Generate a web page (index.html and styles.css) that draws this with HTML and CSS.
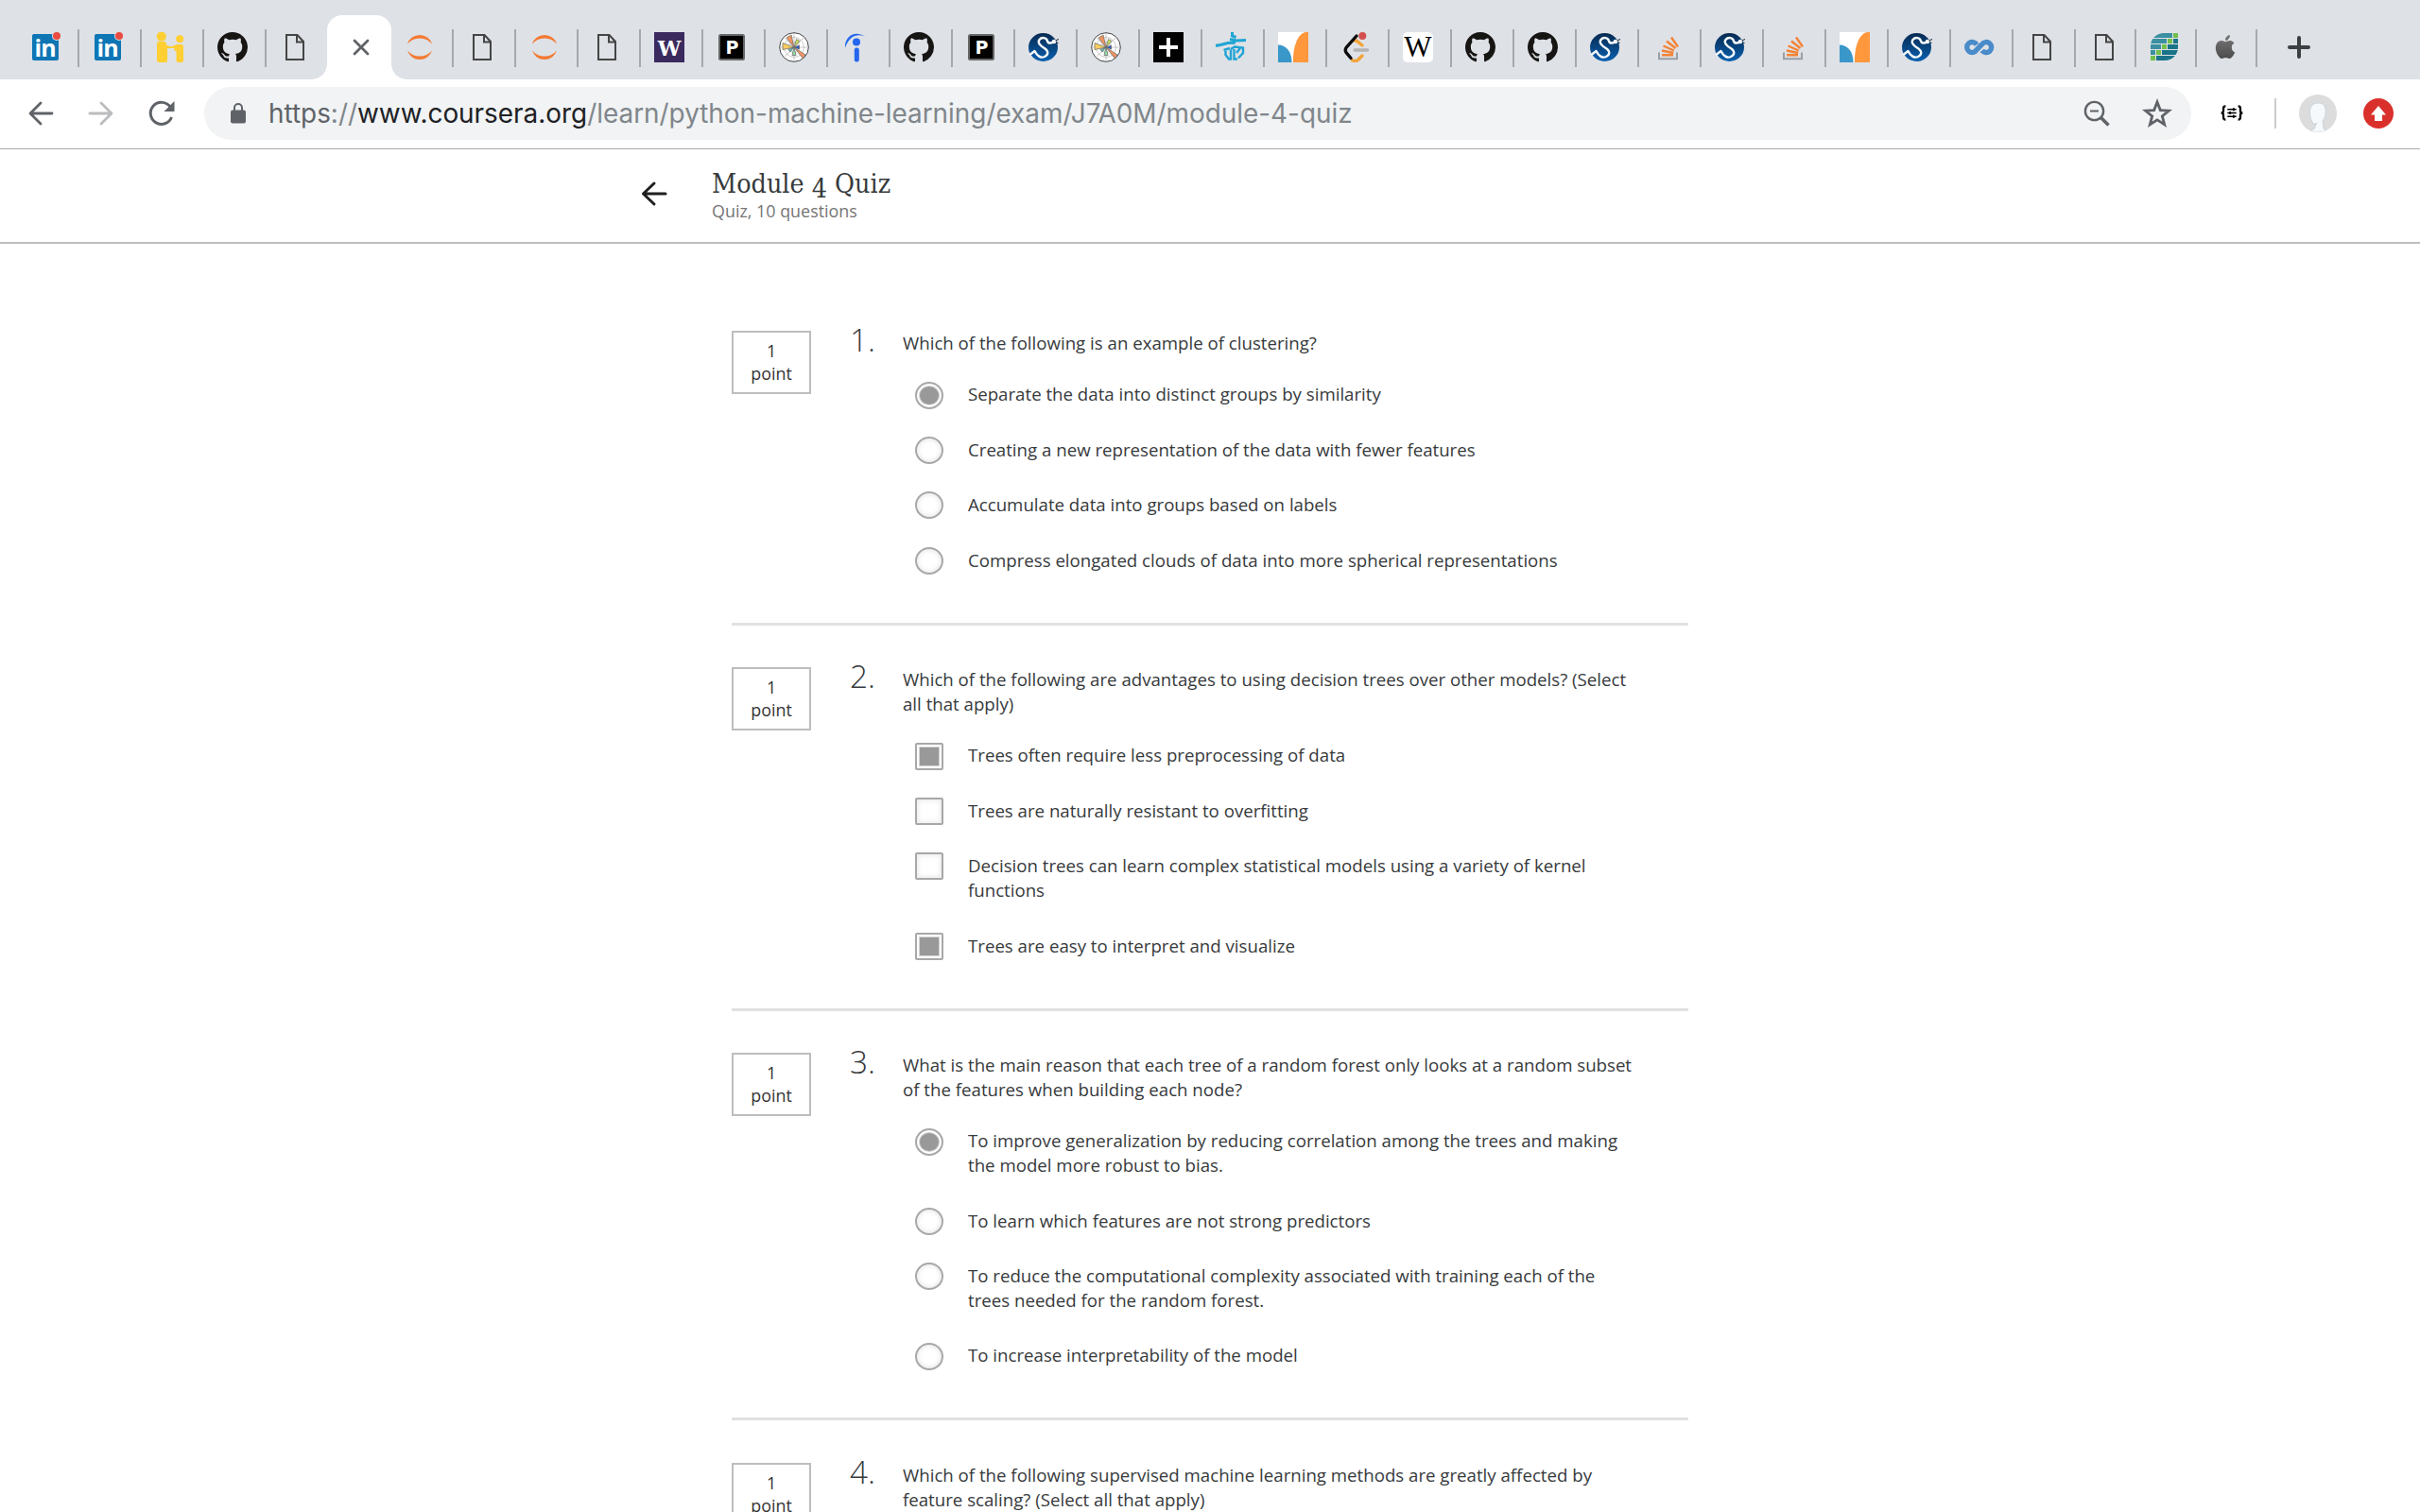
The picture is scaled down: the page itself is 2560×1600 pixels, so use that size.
FILE: index.html
```
<!DOCTYPE html>
<html lang="en">
<head>
<meta charset="utf-8">
<title>Module 4 Quiz</title>
<link rel="stylesheet" href="styles.css">
</head>
<body>
<svg class="defs" width="0" height="0">
  <defs>
    <linearGradient id="navy" x1="0" y1="0" x2="0" y2="1"><stop offset="0" stop-color="#062a50"/><stop offset="1" stop-color="#0a60b0"/></linearGradient>
    <linearGradient id="steel" x1="0" y1="0" x2="0" y2="1"><stop offset="0" stop-color="#777"/><stop offset="1" stop-color="#4c4c4c"/></linearGradient>
    <clipPath id="leaf"><path d="M15 1H30V16A14 14 0 0 1 16 30H1V15A14 14 0 0 1 15 1Z"/></clipPath>
    <clipPath id="disc"><circle cx="20" cy="20" r="20"/></clipPath>
  </defs>
  <symbol id="hi" viewBox="0 0 32 32"><g fill="#ffcf33"><circle cx="6.800" cy="4.600" r="5"/><circle cx="26.200" cy="7.200" r="4"/><path d="M2 12Q2 10 4 10H10Q12 10 12 13.500L15 15H19L21.500 13.500Q22 13 24 13H28Q30 13 30 15V30Q30 32 28 32H24.500Q22.500 32 22.500 30V20H20.500V17H13V30Q13 32 11 32H4Q2 32 2 30Z"/></g></symbol>
  <symbol id="github" viewBox="0 0 16 16"><path fill="#161514" d="M8 0C3.58 0 0 3.58 0 8c0 3.54 2.29 6.53 5.47 7.59.4.07.55-.17.55-.38 0-.19-.01-.82-.01-1.49-2.01.37-2.53-.49-2.69-.94-.09-.23-.48-.94-.82-1.13-.28-.15-.68-.52-.01-.53.63-.01 1.08.58 1.23.82.72 1.21 1.87.87 2.33.66.07-.52.28-.87.51-1.07-1.78-.2-3.64-.89-3.64-3.95 0-.87.31-1.59.82-2.15-.08-.2-.36-1.02.08-2.12 0 0 .67-.21 2.2.82.64-.18 1.32-.27 2-.27s1.36.09 2 .27c1.53-1.04 2.2-.82 2.2-.82.44 1.1.16 1.92.08 2.12.51.56.82 1.27.82 2.15 0 3.07-1.87 3.75-3.65 3.95.29.25.54.73.54 1.48 0 1.07-.01 1.93-.01 2.2 0 .21.15.46.55.38A8.01 8.01 0 0 0 16 8c0-4.42-3.58-8-8-8z"/></symbol>
  <symbol id="page" viewBox="0 0 32 32"><path d="M7 3H18.500L25 10V29H7ZM18 3V10.500H25" fill="none" stroke="#454545" stroke-width="2"/></symbol>
  <symbol id="jupyter" viewBox="0 0 32 32"><g fill="#f37a33"><path d="M3 12.500A13.600 13.600 0 0 1 29 12.500Q24 6.500 16 6.500T3 12.500Z"/><path d="M3 19.500A13.600 13.600 0 0 0 29 19.500Q24 25.500 16 25.500T3 19.500Z"/></g></symbol>
  <symbol id="radar" viewBox="0 0 32 32"><circle cx="16" cy="16" r="15.300" fill="#fff" stroke="#444" stroke-width="1"/><g fill="none" stroke="#bbb" stroke-width=".8"><circle cx="16" cy="16" r="10.500"/><circle cx="16" cy="16" r="5.500"/><path d="M16 1V31M1 16H31M5.400 5.400L26.600 26.600M5.400 26.600L26.600 5.400"/></g><g stroke="#666" stroke-width=".7"><path d="M16 16L8 6L13 3Z" fill="#f39560"/><path d="M16 16L28 24L25 27.500Z" fill="#f39560"/><path d="M16 16L4 11.500V18.500Z" fill="#f8cd5c"/><path d="M16 16L18.500 7.500L22 9.500Z" fill="#c5e35c"/><path d="M16 16L14 24.500H18Z" fill="#93dba0"/><path d="M16 16L10 18.500L12 21Z" fill="#5fc0b8"/><path d="M16 16L21.500 14V18Z" fill="#2c58c0"/></g></symbol>
  <symbol id="indeed" viewBox="0 0 32 32"><g fill="#2566ef"><circle cx="16" cy="10.500" r="4"/><rect x="13.800" y="16.500" width="5" height="15" rx="2.300"/><path d="M4 16.500C3 6 13 -3 25 4.500C16 1 8 5 4 16.500Z"/></g></symbol>
  <symbol id="scipy" viewBox="0 0 32 32"><ellipse cx="15.500" cy="16" rx="15.500" ry="15" fill="url(#navy)"/><path d="M2 23.500L6.500 20C9 25 13 28 17 26C21 24 21.500 20.500 17.500 17.500C13 14.500 9 11.500 11.500 8C14 5 19 5.500 20 9.500C21 12.500 24.500 12 28 9.500" fill="none" stroke="#f4f8fb" stroke-width="2.400" stroke-linecap="round" stroke-linejoin="round"/><circle cx="27" cy="10" r="2.300" fill="#f4f8fb"/><path d="M28.500 9L32 7.500M29 10.500L31.500 11.500" stroke="#123" stroke-width="1"/></symbol>
  <symbol id="plusbox" viewBox="0 0 32 32"><rect width="32" height="32" fill="#000"/><path d="M16 6V26M6 16H26" stroke="#fff" stroke-width="4"/></symbol>
  <symbol id="skater" viewBox="0 0 32 32"><g fill="none" stroke="#20a4d4"><path d="M17.500 0V4L21.500 5.500" stroke-width="3"/><path d="M0 14.500L5 13.500L13 11.500L21 11M15 7.500L22 9L32 8.500" stroke-width="3.200"/><path d="M20 9L17 12" stroke-width="3"/><path d="M8.500 19L15 17M10.500 18.500V24L14 28.500H16V18.500M16 18L20 15.500L29 16.500V22L24 27.500M19.500 18V28.500H23M22 22L25.500 17.500" stroke-width="2.400"/></g></symbol>
  <symbol id="curves" viewBox="0 0 32 32"><rect width="32" height="32" fill="#fff"/><path d="M0 13.500C8 13.500 14.500 20 14.500 32H0Z" fill="#3a97ca"/><path d="M16 32C15.500 17 20 2 29 0H32V32Z" fill="#ff973d"/></symbol>
  <symbol id="bracket" viewBox="0 0 32 32"><g fill="none" stroke-width="3.400" stroke-linecap="round"><path d="M14.500 9L17 9L23 14" stroke="#f3a33a"/><path d="M12.500 29.800Q17 31.500 19 29L23 25" stroke="#f3a33a"/><path d="M17 4L6 16.500Q4.500 19 6 21.500L11 27.500" stroke="#0b0b0b"/><path d="M15.200 19H28.500" stroke="#b3b3b3"/></g><circle cx="23.300" cy="4" r="4" fill="#d3504e"/></symbol>
  <symbol id="stack" viewBox="0 0 32 32"><path d="M7 21.500V28.200H26V21.500" fill="none" stroke="#9a9fa6" stroke-width="2"/><g stroke="#f48336" stroke-width="2.400"><path d="M10 24.300H22M10 19.500L22.200 22M11.500 14.500L22.800 19.500M15 9.500L24.500 17M20 5.500L27 15.500"/></g></symbol>
  <symbol id="loop" viewBox="0 0 32 32"><path d="M13 13.300A5.500 5.500 0 1 0 13 18.700L18.700 12.800A5.500 5.500 0 1 1 18.700 19.300" fill="none" stroke="#4a8bc9" stroke-width="5.400"/></symbol>
  <symbol id="bricks" viewBox="0 0 32 32"><g clip-path="url(#leaf)"><path d="M1 1H24V6H1ZM1 7H18V12H1ZM1 13H12V18H1ZM1 19H6V24H1Z" fill="#3a8fa1"/><path d="M25 7H30V12H25ZM19 13H30V18H19ZM13 19H30V24H13ZM7 25H30V30H7Z" fill="#1a7489"/><path d="M19 7H24V12H19ZM13 13H18V18H13ZM7 19H12V24H7Z" fill="#72bf4b"/></g><path d="M25 1H30V6H25ZM1 25H6V30H1Z" fill="#72bf4b"/></symbol>
  <symbol id="apple" viewBox="0 0 32 32"><path transform="translate(3.500 3) scale(1.040)" fill="url(#steel)" d="M12.152 6.896c-.948 0-2.415-1.078-3.960-1.040-2.040.027-3.910 1.183-4.961 3.014-2.117 3.675-.546 9.103 1.519 12.090 1.013 1.454 2.208 3.090 3.792 3.039 1.520-.065 2.090-.987 3.935-.987 1.831 0 2.350.987 3.960.948 1.637-.026 2.676-1.480 3.676-2.948 1.156-1.688 1.636-3.325 1.662-3.415-.039-.013-3.182-1.221-3.220-4.857-.026-3.040 2.480-4.494 2.597-4.559-1.429-2.090-3.623-2.324-4.390-2.376-2-.156-3.675 1.090-4.610 1.090zM15.530 3.830c.843-1.012 1.400-2.427 1.245-3.830-1.207.052-2.662.805-3.532 1.818-.780.896-1.454 2.338-1.273 3.714 1.338.104 2.715-.688 3.559-1.701"/></symbol>
</svg>

<nav class="tabs">
  <div class="tab"><svg viewBox="0 0 32 32"><rect x="2" y="2" width="28" height="28" rx="2" fill="#0e76b4"/><text x="4.500" y="26" class="glyph-in">in</text><circle cx="28" cy="4" r="5" fill="#dee1e6"/><circle cx="28" cy="4" r="4" fill="#e94b40"/></svg></div>
  <div class="tab"><svg viewBox="0 0 32 32"><rect x="2" y="2" width="28" height="28" rx="2" fill="#0e76b4"/><text x="4.500" y="26" class="glyph-in">in</text><circle cx="28" cy="4" r="5" fill="#dee1e6"/><circle cx="28" cy="4" r="4" fill="#e94b40"/></svg></div>
  <div class="tab"><svg><use href="#hi"/></svg></div>
  <div class="tab"><svg><use href="#github"/></svg></div>
  <div class="tab plain"><svg><use href="#page"/></svg></div>
  <div class="tab active"><svg viewBox="0 0 32 32"><path d="M9 9L23 23M23 9L9 23" stroke="#5f6368" stroke-width="2.800" stroke-linecap="round"/></svg></div>
  <div class="tab"><svg><use href="#jupyter"/></svg></div>
  <div class="tab"><svg><use href="#page"/></svg></div>
  <div class="tab"><svg><use href="#jupyter"/></svg></div>
  <div class="tab"><svg><use href="#page"/></svg></div>
  <div class="tab"><svg viewBox="0 0 32 32"><rect width="32" height="32" fill="#3a2a5e"/><text x="16" y="24.500" class="glyph-uw">W</text></svg></div>
  <div class="tab"><svg viewBox="0 0 32 32"><rect x="3" y="3" width="26" height="26" rx="1.500" fill="#000" stroke="#666" stroke-width="2"/><text x="16.500" y="22.500" class="glyph-p">P</text></svg></div>
  <div class="tab"><svg><use href="#radar"/></svg></div>
  <div class="tab"><svg><use href="#indeed"/></svg></div>
  <div class="tab"><svg><use href="#github"/></svg></div>
  <div class="tab"><svg viewBox="0 0 32 32"><rect x="3" y="3" width="26" height="26" rx="1.500" fill="#000" stroke="#666" stroke-width="2"/><text x="16.500" y="22.500" class="glyph-p">P</text></svg></div>
  <div class="tab"><svg><use href="#scipy"/></svg></div>
  <div class="tab"><svg><use href="#radar"/></svg></div>
  <div class="tab"><svg><use href="#plusbox"/></svg></div>
  <div class="tab"><svg><use href="#skater"/></svg></div>
  <div class="tab"><svg><use href="#curves"/></svg></div>
  <div class="tab"><svg><use href="#bracket"/></svg></div>
  <div class="tab"><svg viewBox="0 0 32 32"><rect width="32" height="32" rx="5" fill="#fff"/><text x="16" y="26" class="glyph-wiki">W</text></svg></div>
  <div class="tab"><svg><use href="#github"/></svg></div>
  <div class="tab"><svg><use href="#github"/></svg></div>
  <div class="tab"><svg><use href="#scipy"/></svg></div>
  <div class="tab"><svg><use href="#stack"/></svg></div>
  <div class="tab"><svg><use href="#scipy"/></svg></div>
  <div class="tab"><svg><use href="#stack"/></svg></div>
  <div class="tab"><svg><use href="#curves"/></svg></div>
  <div class="tab"><svg><use href="#scipy"/></svg></div>
  <div class="tab"><svg><use href="#loop"/></svg></div>
  <div class="tab"><svg><use href="#page"/></svg></div>
  <div class="tab narrow"><svg><use href="#page"/></svg></div>
  <div class="tab narrow"><svg><use href="#bricks"/></svg></div>
  <div class="tab narrow"><svg><use href="#apple"/></svg></div>
  <div class="new-tab"><svg viewBox="0 0 32 32"><path d="M16 6V26M6 16H26" stroke="#3c4043" stroke-width="4" stroke-linecap="round"/></svg></div>
</nav>

<div class="toolbar">
  <svg class="nav-icon" viewBox="0 0 32 32"><path d="M28 16H5.500M16 5L5 16L16 27" fill="none" stroke="#5f6368" stroke-width="2.800" stroke-linecap="round" stroke-linejoin="round"/></svg>
  <svg class="nav-icon" viewBox="0 0 32 32"><path d="M4 16H26.500M16 5L27 16L16 27" fill="none" stroke="#babcbe" stroke-width="2.800" stroke-linecap="round" stroke-linejoin="round"/></svg>
  <svg class="nav-icon" viewBox="0 0 32 32"><path d="M26.500 20A11.500 11.500 0 1 1 25 9" fill="none" stroke="#5f6368" stroke-width="3"/><path d="M29.500 3V14H18.500Z" fill="#5f6368"/></svg>
  <div class="address">
    <svg class="lock" viewBox="0 0 16 22"><rect y="7.500" width="16" height="14" rx="2" fill="#5f6368"/><path d="M4 8V5A4 4 0 0 1 12 5V8" fill="none" stroke="#5f6368" stroke-width="2"/></svg>
    <div class="url"><span class="scheme">https</span>://<span class="host">www.coursera.org</span>/learn/python-machine-learning/exam/J7A0M/module-4-quiz</div>
    <svg class="act" viewBox="0 0 32 32"><g fill="none" stroke="#5f6368"><circle cx="13.500" cy="13.500" r="9.600" stroke-width="2.400"/><path d="M9 13.500H18" stroke-width="2"/><path d="M20.500 20.500L28.500 28.500" stroke-width="3.600"/></g></svg>
    <svg class="act" viewBox="0 0 32 32"><path d="M16 4L19.300 12.600L28.500 13.100L21.300 18.900L23.700 27.800L16 22.800L8.300 27.800L10.700 18.900L3.500 13.100L12.700 12.600Z" fill="none" stroke="#5f6368" stroke-width="2.800"/></svg>
  </div>
  <svg class="braces" viewBox="0 0 26 18"><g fill="none" stroke="#000"><path d="M6 1.500Q3.500 1.500 3.500 4V6.500Q3.500 9 1 9Q3.500 9 3.500 11.500V14Q3.500 16.500 6 16.500M20 1.500Q22.500 1.500 22.500 4V6.500Q22.500 9 25 9Q22.500 9 22.500 11.500V14Q22.500 16.500 20 16.500" stroke-width="2.400"/><path d="M8 5H18M8 9H18M8 13H18" stroke-width="1.600"/><path d="M15 3.500V6.500M11 7.500V10.500M15 11.500V14.500" stroke-width="2"/></g></svg>
  <div class="rule"></div>
  <svg class="avatar" viewBox="0 0 40 40"><g clip-path="url(#disc)"><rect width="40" height="40" fill="#dcdcdc"/><path d="M11.500 19C11.500 12 15 9 20.500 9S29 12 28 21Q27.500 25 25 28Q25 35 28 40H11Q17 37 17.500 33.500Q17 31 14 29.500Q11.500 25 11.500 19Z" fill="#f6f9fb" stroke="#c4cfd8" stroke-width=".8"/><path d="M13 29Q17 33.500 21 28Q18 31 18 33Q16 30 13 29Z" fill="#b5c6d2"/></g></svg>
  <svg class="update" viewBox="0 0 32 32"><circle cx="16" cy="16" r="16" fill="#da302c"/><path d="M16 8L24 17.500H20V24H12V17.500H8Z" fill="#fff"/></svg>
</div>

<header class="quiz-header">
  <svg class="back" viewBox="0 0 32 32"><path d="M28 16H4.500M16 5L4.500 16L16 27" fill="none" stroke="#1f1f1f" stroke-width="3" stroke-linecap="round" stroke-linejoin="round"/></svg>
  <div>
    <h1 class="title">Module <span class="oldstyle">4</span> Quiz</h1>
    <div class="subtitle">Quiz, 10 questions</div>
  </div>
</header>

<main class="quiz">
  <section class="question">
    <div class="points">1<br>point</div>
    <div class="number">1.</div>
    <div class="body">
      <p class="prompt">Which of the following is an example of clustering?</p>
      <ul class="options">
        <li><i class="radio on"></i><span>Separate the data into distinct groups by similarity</span></li>
        <li><i class="radio"></i><span>Creating a new representation of the data with fewer features</span></li>
        <li><i class="radio"></i><span>Accumulate data into groups based on labels</span></li>
        <li><i class="radio"></i><span>Compress elongated clouds of data into more spherical representations</span></li>
      </ul>
    </div>
  </section>
  <section class="question">
    <div class="points">1<br>point</div>
    <div class="number">2.</div>
    <div class="body">
      <p class="prompt">Which of the following are advantages to using decision trees over other models? (Select<br>all that apply)</p>
      <ul class="options">
        <li><i class="check on"></i><span>Trees often require less preprocessing of data</span></li>
        <li><i class="check"></i><span>Trees are naturally resistant to overfitting</span></li>
        <li><i class="check"></i><span>Decision trees can learn complex statistical models using a variety of kernel<br>functions</span></li>
        <li><i class="check on"></i><span>Trees are easy to interpret and visualize</span></li>
      </ul>
    </div>
  </section>
  <section class="question">
    <div class="points">1<br>point</div>
    <div class="number">3.</div>
    <div class="body">
      <p class="prompt">What is the main reason that each tree of a random forest only looks at a random subset<br>of the features when building each node?</p>
      <ul class="options">
        <li><i class="radio on"></i><span>To improve generalization by reducing correlation among the trees and making<br>the model more robust to bias.</span></li>
        <li><i class="radio"></i><span>To learn which features are not strong predictors</span></li>
        <li><i class="radio"></i><span>To reduce the computational complexity associated with training each of the<br>trees needed for the random forest.</span></li>
        <li><i class="radio"></i><span>To increase interpretability of the model</span></li>
      </ul>
    </div>
  </section>
  <section class="question">
    <div class="points">1<br>point</div>
    <div class="number">4.</div>
    <div class="body">
      <p class="prompt">Which of the following supervised machine learning methods are greatly affected by<br>feature scaling? (Select all that apply)</p>
    </div>
  </section>
</main>
</body>
</html>
```
FILE: styles.css
```
* { box-sizing: border-box; }

html { overflow: hidden; }
body {
  display: flex;
  flex-direction: column;
  margin: 0;
  height: 1600px;
  overflow: hidden;
  background: #fff;
  color: #373a3c;
  font-family: "Open Sans", sans-serif;
}

svg { display: block; }
.defs { position: absolute; }

/* Tab strip */
.tabs {
  display: flex;
  flex: none;
  align-items: flex-end;
  height: 84px;
  padding-left: 18px;
  background: #dee1e6;
}
.tab {
  flex: none;
  width: 66px;
  height: 40px;
  margin-bottom: 13px;
  padding: 3px 0 0 14px;
  border-right: 2px solid #a5a8ac;
}
.tab svg, .new-tab svg { width: 32px; height: 32px; }
.tab.narrow { width: 64px; }
.tab.plain { border-color: transparent; }
.tab.active {
  position: relative;
  width: 68px;
  height: 68px;
  margin: 0 0 0 -2px;
  padding: 18px 0 0 20px;
  border: 0;
  border-radius: 16px 16px 0 0;
  background: #fff;
}
.tab.active::before, .tab.active::after {
  content: "";
  position: absolute;
  bottom: 0;
  width: 16px;
  height: 16px;
}
.tab.active::before { left: -16px; background: radial-gradient(circle at 0 0, transparent 15.5px, #fff 16px); }
.tab.active::after { right: -16px; background: radial-gradient(circle at 100% 0, transparent 15.5px, #fff 16px); }
.new-tab { margin: 0 0 18px 28px; }

.glyph-in { font: 700 25px "Open Sans", sans-serif; letter-spacing: -1px; fill: #fff; }
.glyph-uw { font: 700 22px "DejaVu Serif", serif; text-anchor: middle; fill: #fff; }
.glyph-p { font: 700 19px "DejaVu Sans", sans-serif; text-anchor: middle; fill: #fff; }
.glyph-wiki { font: 400 31px "Liberation Serif", serif; text-anchor: middle; fill: #000; }

/* Toolbar */
.toolbar {
  display: flex;
  flex: none;
  align-items: center;
  height: 74px;
  padding: 0 28px 2px 27px;
  border-bottom: 1px solid #a9abae;
}
.nav-icon { width: 32px; height: 32px; margin-right: 32px; }
.address {
  display: flex;
  align-items: center;
  width: 2102px;
  height: 56px;
  margin-left: -3px;
  padding: 0 20px 0 28px;
  border-radius: 28px;
  background: #f1f3f4;
}
.lock { width: 16px; height: 22px; margin-right: 24px; }
.url {
  flex: 1;
  color: #80868b;
  font: 27.9px/40px Inter, sans-serif;
}
.scheme { color: #5f6368; }
.host { color: #202124; }
.act { width: 32px; height: 32px; margin-left: 32px; }
.braces { width: 26px; height: 17px; margin-left: 30px; }
.rule { width: 2px; height: 32px; margin-left: 32px; background: #c9cbce; }
.avatar { width: 40px; height: 40px; margin-left: 24px; }
.update { width: 32px; height: 32px; margin-left: 28px; }

/* Quiz header */
.quiz-header {
  display: flex;
  flex: none;
  height: 100px;
  padding: 21px 0 0 676px;
  border-bottom: 2px solid #bebebe;
}
.back { width: 32px; height: 32px; margin: 10px 45px 0 0; }
.title {
  margin: 0;
  color: #373a3c;
  font: 400 28.4px/32px "DejaVu Serif Condensed", "DejaVu Serif", serif;
}
.oldstyle { vertical-align: -5px; line-height: 0; }
.subtitle { color: #757575; font-size: 17.9px; line-height: 24px; }

/* Questions */
.quiz {
  flex: 1;
  width: 1012px;
  min-height: 0;
  margin-left: 774px;
  padding-top: 92px;
  overflow: hidden;
}
.question {
  display: flex;
  padding-bottom: 53px;
  margin-bottom: 44.4px;
  border-bottom: 3px solid #e1e1e1;
}
.points {
  width: 84px;
  height: 67px;
  padding-top: 7px;
  border: 2px solid #bdbdbd;
  color: #333;
  font-size: 17.86px;
  line-height: 24px;
  text-align: center;
}
.number {
  width: 56px;
  margin: -4px 0 0 41px;
  font-size: 33.3px;
  font-weight: 300;
  line-height: 26px;
}
.body { font-size: 18.67px; line-height: 26px; white-space: nowrap; }
.prompt { margin: 0; }
.options {
  display: flex;
  flex-direction: column;
  gap: 32.4px;
  margin: 28.4px 0 0;
  padding: 0 0 0 13px;
  list-style: none;
}
.options li { display: flex; gap: 26px; }
.radio, .check {
  flex: none;
  width: 30px;
  height: 29px;
  margin: -0.7px 0 -3px;
  border: 2px solid #a8a8a8;
  background: #fff;
  box-shadow: inset 0 0 4px 2px #ededed;
}
.radio { border-radius: 50%; }
.check { border-radius: 2px; }
.on {
  padding: 2px;
  background: #999 content-box;
  box-shadow: inset 0 0 0 2px #fff, inset 0 0 0 3px #d4d4d4;
}
```
